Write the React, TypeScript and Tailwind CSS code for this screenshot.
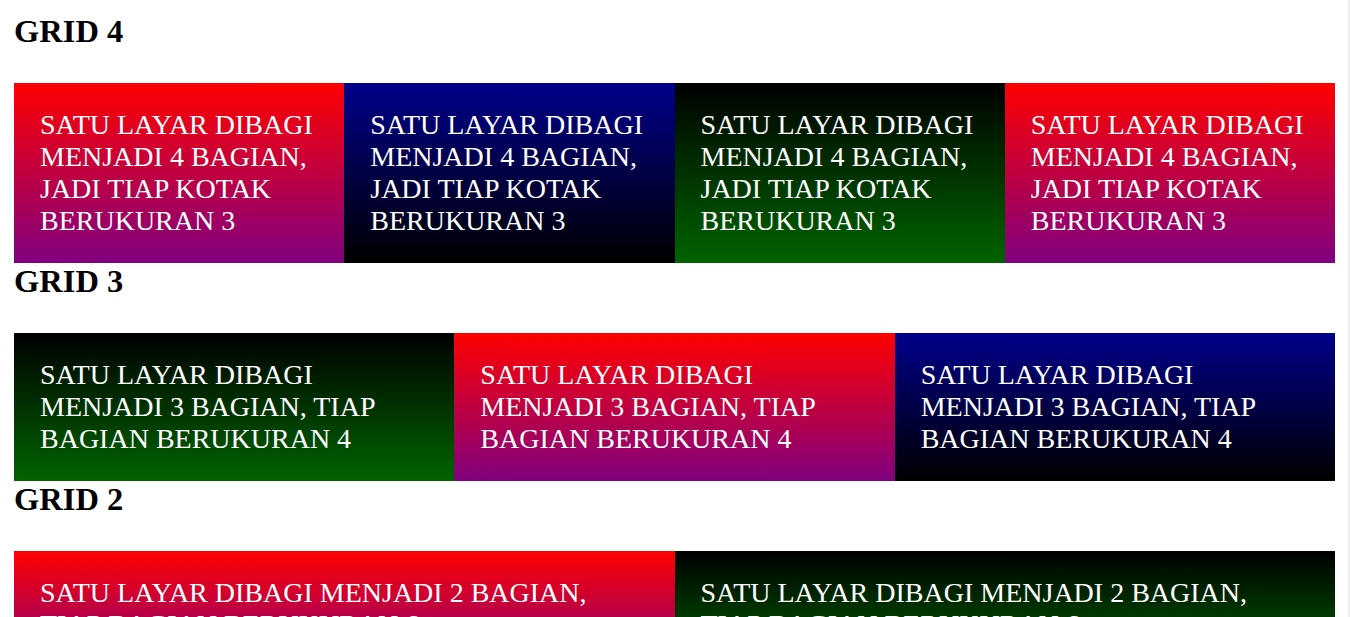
import React from 'react';

type Tone = 'red' | 'blue' | 'green';

interface Row {
  title: string;
  cols: string;
  text: string;
  tones: Tone[];
}

// plain sRGB gradients, written out in full so Tailwind picks them up
const toneClass: Record<Tone, string> = {
  red: 'bg-[linear-gradient(to_bottom,#ff0000,#800080)]',
  blue: 'bg-[linear-gradient(to_bottom,#00008b,#000000)]',
  green: 'bg-[linear-gradient(to_bottom,#000000,#006400)]',
};

const rows: Row[] = [
  {
    title: 'GRID 4',
    cols: 'grid-cols-4',
    text: 'SATU LAYAR DIBAGI MENJADI 4 BAGIAN, JADI TIAP KOTAK BERUKURAN 3',
    tones: ['red', 'blue', 'green', 'red'],
  },
  {
    title: 'GRID 3',
    cols: 'grid-cols-3',
    text: 'SATU LAYAR DIBAGI MENJADI 3 BAGIAN, TIAP BAGIAN BERUKURAN 4',
    tones: ['green', 'red', 'blue'],
  },
  {
    title: 'GRID 2',
    cols: 'grid-cols-2',
    text: 'SATU LAYAR DIBAGI MENJADI 2 BAGIAN, TIAP BAGIAN BERUKURAN 6',
    tones: ['red', 'green'],
  },
];

const Box = ({ tone, text }: { tone: Tone; text: string }) => (
  <div className={`${toneClass[tone]} p-[26px] text-white text-[28px] leading-[32px]`}>
    {text}
  </div>
);

export default function App() {
  return (
    <div className="min-h-screen bg-white pl-[14px] pt-[13px] font-['Liberation_Serif','Times_New_Roman',serif] text-black">
      <div className="w-[1321px]">
        {rows.map((row) => (
          <section key={row.title}>
            <h1 className="text-[32.5px] font-bold leading-[37px] mb-[33px]">{row.title}</h1>
            <div className={`grid ${row.cols}`}>
              {row.tones.map((tone, i) => (
                <Box key={i} tone={tone} text={row.text} />
              ))}
            </div>
          </section>
        ))}
      </div>
      {/* scrollbar edge seen at the right of the window */}
      <div className="fixed top-0 right-0 h-screen w-[2px] bg-[#ededed]" />
    </div>
  );
}
